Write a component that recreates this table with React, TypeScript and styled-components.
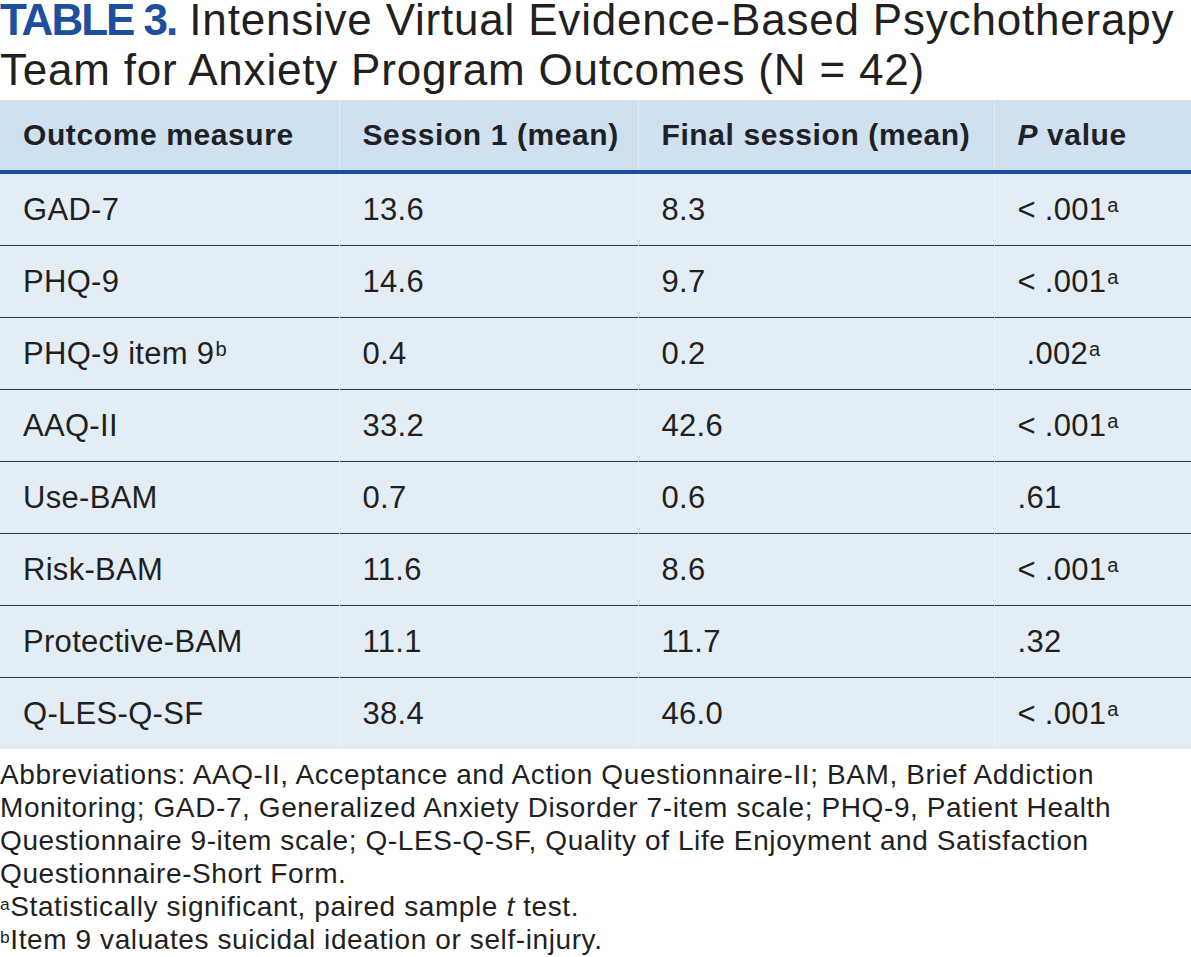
import React from "react";
import styled, { createGlobalStyle } from "styled-components";

const GlobalStyle = createGlobalStyle`
  html, body {
    margin: 0;
    padding: 0;
    background: #ffffff;
  }
  body {
    font-family: "Liberation Sans", Arial, Helvetica, sans-serif;
    color: #231f20;
    overflow: hidden;
  }
`;

const Page = styled.div`
  width: 1191px;
  display: flex;
  flex-direction: column;
`;

const Title = styled.h1`
  margin: -5px 0 5px 0;
  font-size: 44px;
  line-height: 50px;
  font-weight: 400;
  color: #231f20;
  letter-spacing: 0.8px;
`;

const TableLabel = styled.span`
  color: #1d4f9e;
  font-weight: 700;
  letter-spacing: -2px;
`;

const Table = styled.table`
  width: 100%;
  border-collapse: collapse;
  table-layout: fixed;
`;

const HeadRow = styled.tr`
  background: #cfe1ee;
  border-bottom: 4px solid #1c4e9c;
`;

const HeadCell = styled.th`
  height: 70px;
  padding: 0 0 0 23px;
  text-align: left;
  vertical-align: middle;
  font-weight: 700;
  font-size: 30px;
  letter-spacing: 0.6px;
  color: #1e2128;
  white-space: nowrap;
  border-left: 1px solid #e2edf5;
  &:first-child {
    border-left: none;
  }
`;

const BodyRow = styled.tr`
  background: #e2edf5;
  border-top: 1px solid #2e3236;
  &:first-child {
    border-top: none;
  }
`;

const Cell = styled.td`
  height: 71px;
  padding: 0 0 0 23px;
  vertical-align: middle;
  font-size: 31px;
  letter-spacing: 0.3px;
  border-left: 1px solid #ecf3f8;
  white-space: nowrap;
  &:first-child {
    border-left: none;
  }
`;

const Value = styled.span<{ $indent?: boolean }>`
  padding-left: ${(p) => (p.$indent ? "9px" : "0")};
`;

const Sup = styled.sup`
  font-size: 0.65em;
  line-height: 0;
  vertical-align: 0.37em;
  margin-left: 1px;
`;

const Notes = styled.div`
  padding-top: 9px;
  font-size: 28px;
  line-height: 33px;
  letter-spacing: 0.6px;
  color: #231f20;
`;

const NoteLine = styled.p`
  margin: 0;
`;

const NoteSup = styled.sup`
  font-size: 0.62em;
  line-height: 0;
  vertical-align: 0.36em;
`;

type Row = {
  measure: string;
  measureNote?: string;
  s1: string;
  fin: string;
  p: string;
  pNote?: string;
  indent?: boolean;
};

const rows: Row[] = [
  { measure: "GAD-7", s1: "13.6", fin: "8.3", p: "< .001", pNote: "a" },
  { measure: "PHQ-9", s1: "14.6", fin: "9.7", p: "< .001", pNote: "a" },
  { measure: "PHQ-9 item 9", measureNote: "b", s1: "0.4", fin: "0.2", p: ".002", pNote: "a", indent: true },
  { measure: "AAQ-II", s1: "33.2", fin: "42.6", p: "< .001", pNote: "a" },
  { measure: "Use-BAM", s1: "0.7", fin: "0.6", p: ".61" },
  { measure: "Risk-BAM", s1: "11.6", fin: "8.6", p: "< .001", pNote: "a" },
  { measure: "Protective-BAM", s1: "11.1", fin: "11.7", p: ".32" },
  { measure: "Q-LES-Q-SF", s1: "38.4", fin: "46.0", p: "< .001", pNote: "a" },
];

export default function App() {
  return (
    <Page>
      <GlobalStyle />
      <Title>
        <TableLabel>TABLE 3.</TableLabel> Intensive Virtual Evidence-Based Psychotherapy Team for
        Anxiety Program Outcomes (N = 42)
      </Title>
      <Table>
        <colgroup>
          <col style={{ width: 339 }} />
          <col style={{ width: 299 }} />
          <col style={{ width: 356 }} />
          <col style={{ width: 197 }} />
        </colgroup>
        <thead>
          <HeadRow>
            <HeadCell>Outcome measure</HeadCell>
            <HeadCell>Session 1 (mean)</HeadCell>
            <HeadCell>Final session (mean)</HeadCell>
            <HeadCell>
              <i>P</i> value
            </HeadCell>
          </HeadRow>
        </thead>
        <tbody>
          {rows.map((r) => (
            <BodyRow key={r.measure}>
              <Cell>
                {r.measure}
                {r.measureNote && <Sup>{r.measureNote}</Sup>}
              </Cell>
              <Cell>{r.s1}</Cell>
              <Cell>{r.fin}</Cell>
              <Cell>
                <Value $indent={r.indent}>
                  {r.p}
                  {r.pNote && <Sup>{r.pNote}</Sup>}
                </Value>
              </Cell>
            </BodyRow>
          ))}
        </tbody>
      </Table>
      <Notes>
        <NoteLine>
          Abbreviations: AAQ-II, Acceptance and Action Questionnaire-II; BAM, Brief Addiction
          Monitoring; GAD-7, Generalized Anxiety Disorder 7-item scale; PHQ-9, Patient Health
          Questionnaire 9-item scale; Q-LES-Q-SF, Quality of Life Enjoyment and Satisfaction
          Questionnaire-Short Form.
        </NoteLine>
        <NoteLine>
          <NoteSup>a</NoteSup>Statistically significant, paired sample <i>t</i> test.
        </NoteLine>
        <NoteLine>
          <NoteSup>b</NoteSup>Item 9 valuates suicidal ideation or self-injury.
        </NoteLine>
      </Notes>
    </Page>
  );
}
